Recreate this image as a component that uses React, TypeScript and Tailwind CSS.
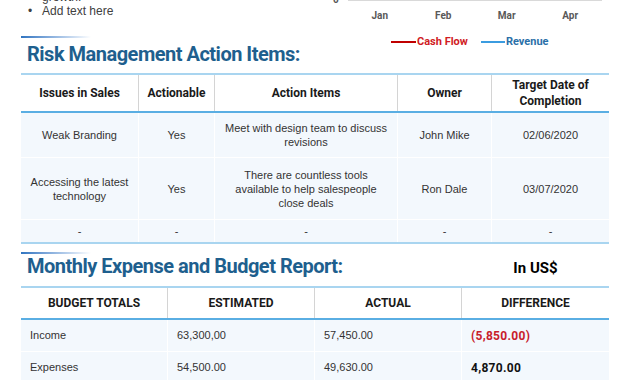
import React from 'react';

const months = ['Jan', 'Feb', 'Mar', 'Apr'];

const narrow = "[font-family:Roboto,'Liberation_Sans',sans-serif]";

const SectionTitle: React.FC<{ title: string; right?: string; first?: boolean }> = ({ title, right, first }) => (
  <div>
    <div className="h-[2px] w-[70px] bg-gradient-to-r from-[#2f74c0] to-white" />
    <div className={`flex items-start justify-between ${first ? 'h-[35px] pt-[5px]' : 'h-[32px] pt-[1px]'}`}>
      <h2 className={`pl-[6px] text-[20px] leading-[22px] font-bold tracking-[-0.5px] text-[#1e5f8e] ${narrow}`}>
        {title}
      </h2>
      {right && (
        <span className={`w-[147px] pt-[3px] text-center text-[15px] leading-[20px] font-bold text-black ${narrow}`}>
          {right}
        </span>
      )}
    </div>
  </div>
);

const TopArea: React.FC = () => (
  <div className="flex h-[36px]">
    <div className="w-[310px] pl-[7px] pt-[2px] text-[12px] text-[#404040] leading-[14px]">
      <div className="-mt-[12px] pl-[14px]">growth.</div>
      <div className="flex">
        <span className="w-[14px]">•</span>
        <span>Add text here</span>
      </div>
    </div>
    <div className={`flex-1 ${narrow}`}>
      <div className="flex items-start">
        <span className="w-[17px] pl-[2px] -mt-[8px] text-[10px] font-bold text-[#595959]">0</span>
        <div className="w-[254px]">
          <div className="h-px bg-[#d9d9d9]" />
          <div className="flex mt-[9px]">
            {months.map(m => (
              <span key={m} className="flex-1 text-center text-[10px] leading-[12px] font-bold text-[#595959]">
                {m}
              </span>
            ))}
          </div>
        </div>
      </div>
      <div className="flex items-center mt-[14px] pl-[60px] text-[11px] leading-[12px] font-bold">
        <span className="w-[25px] h-[2px] bg-[#c00000]" />
        <span className="pl-[1px] text-[#d01c24]">Cash Flow</span>
        <span className="ml-[13px] w-[24px] h-[2px] bg-[#3b9ce0]" />
        <span className="pl-[1px] text-[#2a6fa8]">Revenue</span>
      </div>
    </div>
  </div>
);

const headCell = `flex items-center justify-center text-center text-[12px] leading-[16px] font-bold text-[#1a1a1a] ${narrow}`;
const bodyCell = 'flex items-center justify-center text-center px-[4px] text-[11px] leading-[14px] text-[#333]';

const RiskTable: React.FC = () => {
  const cols = ['w-[118px]', 'w-[76px]', 'w-[183px]', 'w-[94px]', 'w-[117px]'];
  const rows = [
    ['Weak Branding', 'Yes', 'Meet with design team to discuss revisions', 'John Mike', '02/06/2020'],
    ['Accessing the latest technology', 'Yes', 'There are countless tools available to help salespeople close deals', 'Ron Dale', '03/07/2020'],
    ['-', '-', '-', '-', '-'],
  ];
  const heights = ['h-[45px]', 'h-[62px]', 'h-[22px]'];
  return (
    <div className="border-t-2 border-b-2 border-[#a9d5f0]">
      <div className="flex h-[38px] border-b-2 border-[#5aaee3]">
        {['Issues in Sales', 'Actionable', 'Action Items', 'Owner', 'Target Date of Completion'].map((h, i) => (
          <div
            key={h}
            className={`${cols[i]} ${headCell} ${i < 4 ? 'border-r border-[#d4d4d4]' : 'px-[12px]'}`}
          >
            {h}
          </div>
        ))}
      </div>
      {rows.map((r, ri) => (
        <div key={ri} className={`flex ${heights[ri]} bg-[#f3f8fd] ${ri < 2 ? 'border-b border-white' : ''}`}>
          {r.map((c, i) => (
            <div
              key={i}
              className={`${cols[i]} ${bodyCell} ${i < 4 ? 'border-r border-white' : ''} ${ri === 1 && i === 2 ? 'px-[14px]' : ''}`}
            >
              {c}
            </div>
          ))}
        </div>
      ))}
    </div>
  );
};

const BudgetTable: React.FC = () => {
  const rows = [
    { label: 'Income', est: '63,300,00', act: '57,450.00', diff: '(5,850.00)', neg: true },
    { label: 'Expenses', est: '54,500.00', act: '49,630.00', diff: '4,870.00', neg: false },
  ];
  return (
    <div className="border-t-2 border-[#a9d5f0]">
      <div className="grid grid-cols-4 h-[32px] border-b-2 border-[#5aaee3]">
        {['BUDGET TOTALS', 'ESTIMATED', 'ACTUAL', 'DIFFERENCE'].map((h, i) => (
          <div key={h} className={`${headCell} ${i < 3 ? 'border-r border-[#d4d4d4]' : ''}`}>
            {h}
          </div>
        ))}
      </div>
      {rows.map(r => (
        <div key={r.label} className="grid grid-cols-4 h-[32px] bg-[#f3f8fd] border-b border-white text-[11px] text-[#333]">
          <div className="flex items-center pl-[9px] border-r border-white">{r.label}</div>
          <div className="flex items-center pl-[9px] border-r border-white">{r.est}</div>
          <div className="flex items-center pl-[9px] border-r border-white">{r.act}</div>
          <div
            className={`flex items-center pl-[9px] text-[12px] font-bold tracking-[0.3px] ${narrow} ${
              r.neg ? 'text-[#c8202b]' : 'text-[#111]'
            }`}
          >
            {r.diff}
          </div>
        </div>
      ))}
    </div>
  );
};

export default function App() {
  return (
    <div className="w-[630px] h-[380px] overflow-hidden bg-white [font-family:'Liberation_Sans',Arial,sans-serif]">
      <div className="px-[21px]">
        <TopArea />
        <SectionTitle title="Risk Management Action Items:" first />
        <RiskTable />
        <div className="h-[8px]" />
        <SectionTitle title="Monthly Expense and Budget Report:" right="In US$" />
        <BudgetTable />
      </div>
    </div>
  );
}
